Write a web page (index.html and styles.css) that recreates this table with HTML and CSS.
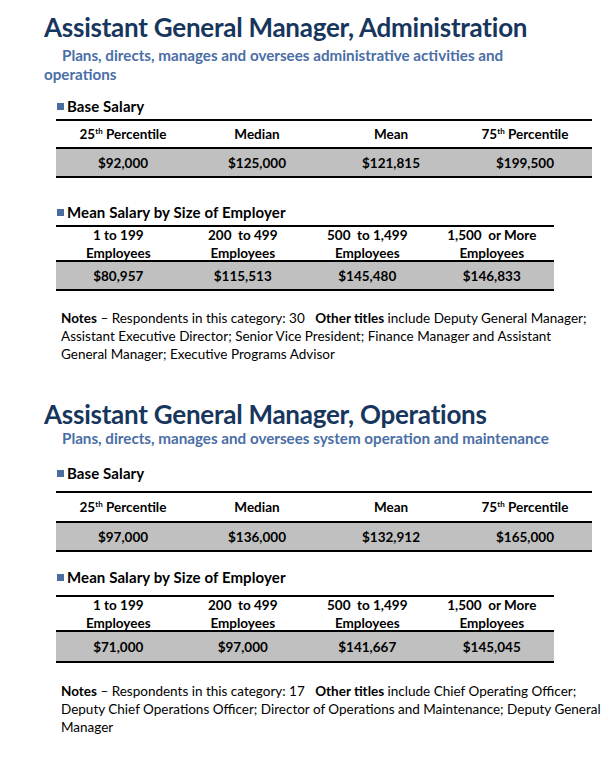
FILE: index.html
```html
<!DOCTYPE html>
<html>
<head>
<meta charset="utf-8">
<link rel="stylesheet" href="styles.css">
</head>
<body>
<div class="page">
  <section class="job">
    <h1 class="title">Assistant General Manager, Administration</h1>
    <p class="desc">Plans, directs, manages and oversees administrative activities and operations</p>

    <h2 class="sub"><span class="sq"></span>Base Salary</h2>
    <div class="tbl wide">
      <div class="row head">
        <div>25<sup>th</sup> Percentile</div><div>Median</div><div>Mean</div><div>75<sup>th</sup> Percentile</div>
      </div>
      <div class="row vals">
        <div>$92,000</div><div>$125,000</div><div>$121,815</div><div>$199,500</div>
      </div>
    </div>

    <h2 class="sub sub2"><span class="sq"></span>Mean Salary by Size of Employer</h2>
    <div class="tbl narrow">
      <div class="row head two">
        <div>1 to 199<br>Employees</div><div>200&nbsp; to 499<br>Employees</div><div>500&nbsp; to 1,499<br>Employees</div><div>1,500&nbsp; or More<br>Employees</div>
      </div>
      <div class="row vals">
        <div>$80,957</div><div>$115,513</div><div>$145,480</div><div>$146,833</div>
      </div>
    </div>

    <p class="notes"><b>Notes</b> – Respondents in this category: 30&nbsp;&nbsp; <b>Other titles</b> include Deputy General Manager;<br>Assistant Executive Director; Senior Vice President; Finance Manager and Assistant<br>General Manager; Executive Programs Advisor</p>
  </section>

  <section class="job job2">
    <h1 class="title">Assistant General Manager, Operations</h1>
    <p class="desc">Plans, directs, manages and oversees system operation and maintenance</p>

    <h2 class="sub"><span class="sq"></span>Base Salary</h2>
    <div class="tbl wide">
      <div class="row head">
        <div>25<sup>th</sup> Percentile</div><div>Median</div><div>Mean</div><div>75<sup>th</sup> Percentile</div>
      </div>
      <div class="row vals">
        <div>$97,000</div><div>$136,000</div><div>$132,912</div><div>$165,000</div>
      </div>
    </div>

    <h2 class="sub sub2"><span class="sq"></span>Mean Salary by Size of Employer</h2>
    <div class="tbl narrow">
      <div class="row head two">
        <div>1 to 199<br>Employees</div><div>200&nbsp; to 499<br>Employees</div><div>500&nbsp; to 1,499<br>Employees</div><div>1,500&nbsp; or More<br>Employees</div>
      </div>
      <div class="row vals">
        <div>$71,000</div><div>$97,000</div><div>$141,667</div><div>$145,045</div>
      </div>
    </div>

    <p class="notes"><b>Notes</b> – Respondents in this category: 17&nbsp;&nbsp; <b>Other titles</b> include Chief Operating Officer;<br>Deputy Chief Operations Officer; Director of Operations and Maintenance; Deputy General<br>Manager</p>
  </section>
</div>
</body>
</html>
```

FILE: styles.css
```css
html, body {
  margin: 0;
  padding: 0;
  background: #ffffff;
}
body {
  font-family: Lato, "Open Sans", sans-serif;
  color: #000;
}
.page {
  padding: 11px 0 0 44px;
  width: 568px;
}
.title {
  margin: 0;
  font-size: 26px;
  line-height: 32px;
  font-weight: 700;
  color: #17365d;
  letter-spacing: -0.25px;
}
.desc {
  margin: 3px 0 0;
  font-size: 15.2px;
  line-height: 19px;
  font-weight: 700;
  color: #4a6ea6;
  text-indent: 18px;
  width: 470px;
}
.job2 .desc {
  width: 550px;
  margin-top: -1px;
}
.sub {
  margin: 13px 0 0 13px;
  font-size: 15px;
  line-height: 18px;
  font-weight: 700;
  display: flex;
  align-items: center;
  letter-spacing: 0.1px;
}
.sq {
  width: 7px;
  height: 7px;
  background: #4a6c9e;
  margin-right: 3px;
  margin-top: 1px;
}
.sub2 {
  margin-top: 25px;
}
.job2 .sub {
  margin-top: 16px;
}
.job2 .sub2 {
  margin-top: 16px;
}
.tbl {
  margin-left: 12px;
  margin-top: 4px;
  border-top: 2px solid #000;
  font-size: 13.5px;
  font-weight: 700;
}
.job2 .tbl {
  margin-top: 9px;
}
.tbl.wide { width: 536px; }
.tbl.narrow { width: 498px; }
.row {
  display: grid;
  grid-template-columns: repeat(4, 1fr);
  text-align: center;
  border-bottom: 2px solid #000;
}
.head {
  height: 26px;
  align-items: center;
}
.job2 .head {
  height: 28px;
}
.head.two,
.job2 .head.two {
  height: 34px;
  line-height: 18px;
  margin-top: -1px;
}
.vals {
  background: #c0c0c0;
  height: 27px;
  align-items: center;
}
.job2 .narrow .vals {
  height: 29px;
}
sup {
  font-size: 8px;
  vertical-align: 5px;
  line-height: 0;
}
.notes {
  margin: 18px 0 0 17px;
  font-size: 13.5px;
  line-height: 18px;
  white-space: nowrap;
}
.job2 .notes {
  margin-top: 19px;
}
.job2 {
  margin-top: 35px;
}
```
